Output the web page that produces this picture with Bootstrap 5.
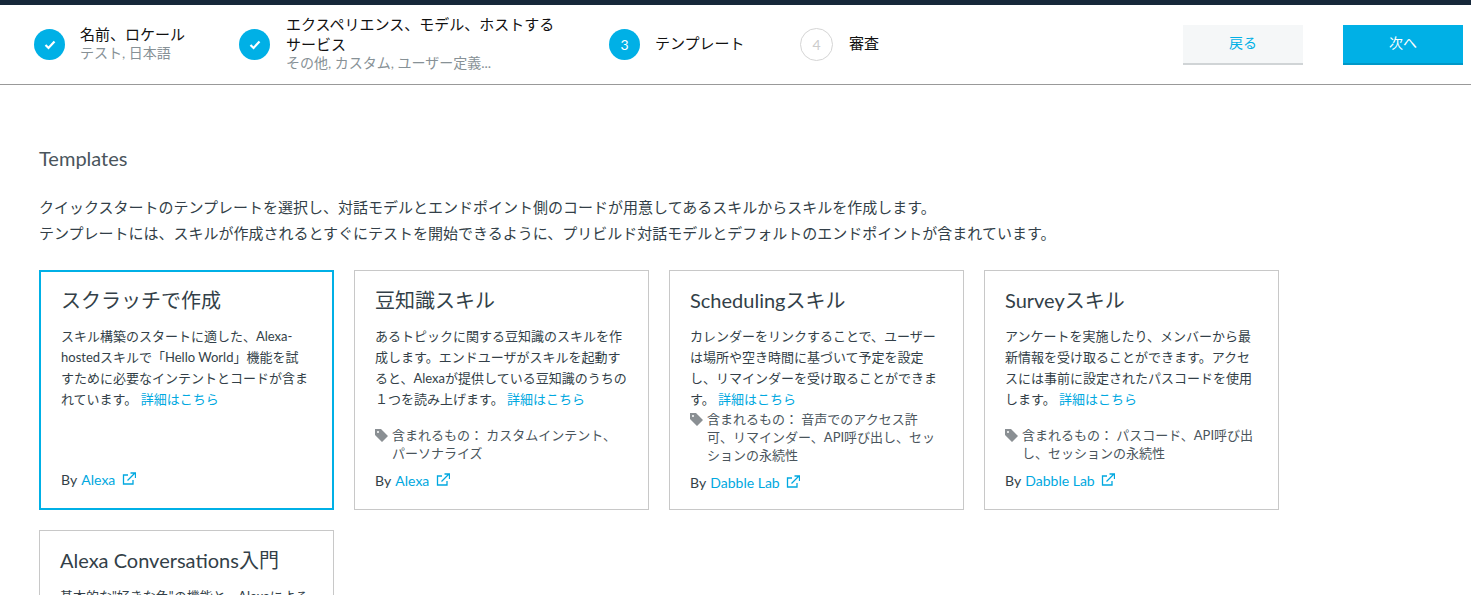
<!DOCTYPE html>
<html lang="ja">
<head>
<meta charset="utf-8">
<title>テンプレート</title>
<link href="https://cdn.jsdelivr.net/npm/bootstrap@5.3.0/dist/css/bootstrap.min.css" rel="stylesheet">
<style>
html,body{height:595px;overflow:hidden}
body{font-family:"Lato","Noto Sans CJK JP",sans-serif;color:#333f48;background:#fff}
.topbar{height:5px;background:#16283a}
.wizard{height:80px;border-bottom:1px solid #999;padding-left:34px;padding-right:8px}
.step{color:#111;font-size:15px;line-height:20px}
.step-text{padding-bottom:3px}
.step-1{width:205px;gap:15px}.step-2{width:370px;gap:16px}.step-3{width:191px;gap:15px}.step-4{width:383px;gap:16px}
.step-body{width:275px}
.step-sub{color:#879196;font-size:14px;line-height:18px}
.bubble{flex:0 0 31px;width:31px;height:31px;background:#00b0e6;color:#fff;font-size:14px;font-weight:400}
.bubble.todo{flex-basis:33px;width:33px;height:33px;background:#fff;color:#ccc;border:1px solid #d5d5d5}
.wbtn{width:120px;height:40px;font-size:14px;border-radius:0;border:0;border-bottom:2px solid #d0d4d6;background:#f5f7f8;color:#00b0e6;padding:0 0 2px}
.wbtn.next{background:#00b0e6;color:#fff;border-bottom-color:#0098c8;margin-left:40px}
.main{padding:63px 39px 0}
h1.ttl{font-size:20px;line-height:20px;font-weight:400;color:#4a555c;margin:0 0 26px}
.intro{font-size:15px;line-height:26px;color:#333f48;margin:0 0 24px}
.tgrid{display:grid;grid-template-columns:repeat(4,295px);grid-auto-rows:240px;gap:20px}
.tcard{border:1px solid #c8c8c8;border-radius:0;padding:15px 20px 19px;background:#fff}
.tcard.sel{border:2px solid #00b0e6;padding:14px 20px 19px}
.tcard.low{padding-bottom:17px}
.tcard h2{font-size:20px;line-height:28px;font-weight:400;color:#333f48;margin:0 0 12px}
.tcard p{font-size:13px;line-height:21px;margin:0;color:#333f48}
.tcard a{color:#00a8e0;text-decoration:none}
.tags{font-size:13px;line-height:18px;color:#4a555c;padding-left:17px;margin-top:16px;position:relative}
.tags svg{position:absolute;left:0;top:3px}
.tags.tight{margin-top:0}
.by{font-size:14px;line-height:18px;margin-top:auto}
.by a{margin-left:1px}
.by svg{vertical-align:-1px;margin-left:3px}
</style>
</head>
<body>
<div class="topbar"></div>
<div class="wizard d-flex align-items-center">
  <div class="step step-1 d-flex align-items-center">
    <span class="bubble rounded-circle d-flex align-items-center justify-content-center"><svg width="12" height="10" viewBox="0 0 12 10"><path d="M1.5 5l3 3 6-6.5" fill="none" stroke="#fff" stroke-width="2.2"/></svg></span>
    <div class="step-text"><div>名前、ロケール</div><div class="step-sub">テスト, 日本語</div></div>
  </div>
  <div class="step step-2 d-flex align-items-center">
    <span class="bubble rounded-circle d-flex align-items-center justify-content-center"><svg width="12" height="10" viewBox="0 0 12 10"><path d="M1.5 5l3 3 6-6.5" fill="none" stroke="#fff" stroke-width="2.2"/></svg></span>
    <div class="step-body step-text"><div>エクスペリエンス、モデル、ホストするサービス</div><div class="step-sub">その他, カスタム, ユーザー定義...</div></div>
  </div>
  <div class="step step-3 d-flex align-items-center">
    <span class="bubble rounded-circle d-flex align-items-center justify-content-center">3</span>
    <div class="step-text">テンプレート</div>
  </div>
  <div class="step step-4 d-flex align-items-center">
    <span class="bubble todo rounded-circle d-flex align-items-center justify-content-center">4</span>
    <div class="step-text">審査</div>
  </div>
  <button class="btn wbtn" type="button">戻る</button>
  <button class="btn wbtn next" type="button">次へ</button>
</div>
<div class="main">
  <h1 class="ttl">Templates</h1>
  <p class="intro">クイックスタートのテンプレートを選択し、対話モデルとエンドポイント側のコードが用意してあるスキルからスキルを作成します。<br>テンプレートには、スキルが作成されるとすぐにテストを開始できるように、プリビルド対話モデルとデフォルトのエンドポイントが含まれています。</p>
  <div class="tgrid">
    <div class="card tcard sel">
      <h2>スクラッチで作成</h2>
      <p>スキル構築のスタートに適した、Alexa-hostedスキルで「Hello World」機能を試<br>すために必要なインテントとコードが含ま<br>れています。 <a href="#">詳細はこちら</a></p>
      <div class="by">By <a href="#">Alexa <svg width="14" height="14" viewBox="0 0 14 14" fill="none" stroke="#00a8e0" stroke-width="1.3"><path d="M11 8v4H1.5V3H6"/><path d="M5.5 8.5L12.5 1.5M8.5 1h5v5" /></svg></a></div>
    </div>
    <div class="card tcard">
      <h2>豆知識スキル</h2>
      <p>あるトピックに関する豆知識のスキルを作成します。エンドユーザがスキルを起動すると、Alexaが提供している豆知識のうちの１つを読み上げます。 <a href="#">詳細はこちら</a></p>
      <div class="tags"><svg width="13" height="13" viewBox="0 0 13 13"><path fill="#8a8f93" d="M0 0h6l7 7-6 6-7-7zM3 2a1 1 0 100 2 1 1 0 000-2z"/></svg>含まれるもの： カスタムインテント、パーソナライズ</div>
      <div class="by">By <a href="#">Alexa <svg width="14" height="14" viewBox="0 0 14 14" fill="none" stroke="#00a8e0" stroke-width="1.3"><path d="M11 8v4H1.5V3H6"/><path d="M5.5 8.5L12.5 1.5M8.5 1h5v5" /></svg></a></div>
    </div>
    <div class="card tcard low">
      <h2>Schedulingスキル</h2>
      <p>カレンダーをリンクすることで、ユーザーは場所や空き時間に基づいて予定を設定し、リマインダーを受け取ることができます。 <a href="#">詳細はこちら</a></p>
      <div class="tags tight"><svg width="13" height="13" viewBox="0 0 13 13"><path fill="#8a8f93" d="M0 0h6l7 7-6 6-7-7zM3 2a1 1 0 100 2 1 1 0 000-2z"/></svg>含まれるもの： 音声でのアクセス許可、リマインダー、API呼び出し、セッションの永続性</div>
      <div class="by">By <a href="#">Dabble Lab <svg width="14" height="14" viewBox="0 0 14 14" fill="none" stroke="#00a8e0" stroke-width="1.3"><path d="M11 8v4H1.5V3H6"/><path d="M5.5 8.5L12.5 1.5M8.5 1h5v5" /></svg></a></div>
    </div>
    <div class="card tcard">
      <h2>Surveyスキル</h2>
      <p>アンケートを実施したり、メンバーから最新情報を受け取ることができます。アクセスには事前に設定されたパスコードを使用します。 <a href="#">詳細はこちら</a></p>
      <div class="tags"><svg width="13" height="13" viewBox="0 0 13 13"><path fill="#8a8f93" d="M0 0h6l7 7-6 6-7-7zM3 2a1 1 0 100 2 1 1 0 000-2z"/></svg>含まれるもの： パスコード、API呼び出し、セッションの永続性</div>
      <div class="by">By <a href="#">Dabble Lab <svg width="14" height="14" viewBox="0 0 14 14" fill="none" stroke="#00a8e0" stroke-width="1.3"><path d="M11 8v4H1.5V3H6"/><path d="M5.5 8.5L12.5 1.5M8.5 1h5v5" /></svg></a></div>
    </div>
    <div class="card tcard">
      <h2>Alexa Conversations入門</h2>
      <p>基本的な"好きな色"の機能と、Alexaによる</p>
    </div>
  </div>
</div>
<script src="https://cdn.jsdelivr.net/npm/bootstrap@5.3.0/dist/js/bootstrap.bundle.min.js"></script>
</body>
</html>
